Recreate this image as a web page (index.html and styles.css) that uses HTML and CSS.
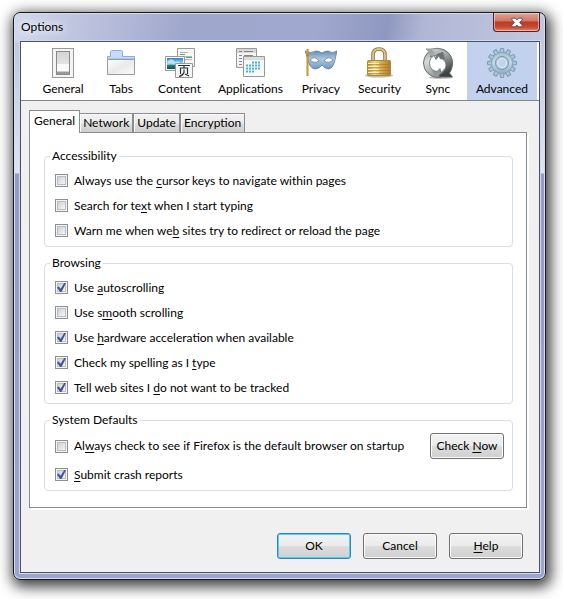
FILE: index.html
```html
<!DOCTYPE html>
<html lang="en">
<head>
<meta charset="utf-8">
<title>Options</title>
<link rel="stylesheet" href="styles.css">
</head>
<body>
<main class="window">
  <header class="titlebar">
    <h1 class="title">Options</h1>
    <button class="close" type="button" aria-label="Close">
      <svg width="12" height="11" viewBox="0 0 14 12"><path d="M1 1h4l2 2 2-2h4v2L10 6l3 3v2H9L7 9l-2 2H1V9l3-3-3-3z" fill="#fff" stroke="#534654" stroke-width="1"/></svg>
    </button>
  </header>
  <div class="content">
    <nav class="toolbar">
      <button class="category" type="button">
        <svg class="icon" viewBox="0 0 32 32">
          <defs><linearGradient id="sw" x2="0" y2="1"><stop stop-color="#d4d4d4"/><stop offset="1" stop-color="#eee"/></linearGradient></defs>
          <rect x="5.500" y="1.500" width="21" height="29" fill="#f4f4f4" stroke="#999"/>
          <rect x="9.500" y="4.500" width="13" height="23" fill="url(#sw)" stroke="#888"/>
          <path d="M10 17h12v7H10z" fill="#fafafa"/><path d="M10 24h12v3H10z" fill="#999"/><path d="M10 24.500h12" stroke="#ccc"/>
        </svg>
        <span>General</span>
      </button>
      <button class="category" type="button">
        <svg class="icon" viewBox="0 0 32 32">
          <defs><linearGradient id="fd" x2="1" y2="1"><stop stop-color="#fff"/><stop offset=".5" stop-color="#eaeaea"/><stop offset="1" stop-color="#fafafa"/></linearGradient></defs>
          <path d="M2.500 12V9.500h3V4.500l1-1h10l1 1v5h12V12z" fill="#c4dcf8" stroke="#8facd2"/>
          <path d="M2.500 12.500h27v15h-27z" fill="url(#fd)" stroke="#999ba0"/><path d="M3 11.500h26" stroke="#a8c8f0"/>
        </svg>
        <span>Tabs</span>
      </button>
      <button class="category" type="button">
        <svg class="icon" viewBox="0 0 32 32">
          <defs><linearGradient id="sky" x2="0" y2="1"><stop stop-color="#2c7fc4"/><stop offset=".55" stop-color="#b5e2f2"/><stop offset=".65" stop-color="#277d8b"/><stop offset="1" stop-color="#174f38"/></linearGradient></defs>
          <path d="M13.500 1.500h17v18h-17z" fill="#f7f7f7" stroke="#999"/>
          <path d="M16 5.500h8M18 9.500h10M21 12.500h7" stroke="#aeb4bd"/><path d="M16 7.500h5M22 10.500h6" stroke="#5a9c91"/>
          <path d="M1.500 9.500h19v14h-19z" fill="#fff" stroke="#999"/><path d="M3 11h16v11H3z" fill="url(#sky)"/><path d="M4 14q4-4 7 1q4-2 5 1H4z" fill="#bce3f3"/>
          <path d="M11.500 16.500h17v14h-17z" fill="#f5f5f5" stroke="#999"/>
          <path d="M14 18.500h12M20 18v3M16.500 27v-6h7v6M20 22.500v3q-1 3-5 4M21 27l4 2" fill="none" stroke="#333" stroke-width="1.200"/>
        </svg>
        <span>Content</span>
      </button>
      <button class="category wide" type="button">
        <svg class="icon" viewBox="0 0 32 32">
          <path d="M2.500 1.500h20v19h-20z" fill="#f4f4f4" stroke="#999"/><path d="M3 2h19v4H3z" fill="#d8d8d8"/>
          <path d="M5 4.500h3M10 4.500h9M5 8.500h3M10 8.500h9M5 11.500h3M5 14.500h3M5 17.500h3" stroke="#888"/>
          <path d="M9.500 9.500h21v20h-21z" fill="#f9f9f9" stroke="#999"/><path d="M10 10h20v3H10z" fill="#ddd"/>
          <path d="M18 15.500h9M12 18.500h15M12 21.500h15M12 24.500h9" stroke="#48b5d8" stroke-width="2" stroke-dasharray="2 1"/>
        </svg>
        <span>Applications</span>
      </button>
      <button class="category" type="button">
        <svg class="icon" viewBox="0 0 32 32">
          <defs><linearGradient id="mask" x2="0" y2="1"><stop stop-color="#688caf"/><stop offset=".45" stop-color="#adc9e5"/><stop offset="1" stop-color="#6e98c1"/></linearGradient></defs>
          <path d="M0 4q6 3 11 0q3 0 6 2q3-2 6-2q4 3 9 0q-1 4-2 9q-2 9-7 9q-4-1-6-4q-3 4-7 4q-6-1-7-10z" fill="url(#mask)" stroke="#55728d" stroke-width=".7"/>
          <path d="M5 13q5-5 9 1q-5 3-9-1zM19 14q4-6 9-1q-4 4-9 1z" fill="#fff" stroke="#5b7c9d" stroke-width=".7"/>
          <path d="M2.500 2v27" stroke="#b98620" stroke-width="2"/><path d="M2 3v25" stroke="#f5ce68" stroke-width=".6"/><circle cx="2.500" cy="8" r="1.500" fill="#b88620"/>
        </svg>
        <span>Privacy</span>
      </button>
      <button class="category" type="button">
        <svg class="icon" viewBox="0 0 32 32">
          <defs><linearGradient id="gold"><stop stop-color="#bd9340"/><stop offset=".3" stop-color="#f1d884"/><stop offset=".65" stop-color="#d0a447"/><stop offset="1" stop-color="#ad7e2b"/></linearGradient></defs>
          <ellipse cx="16" cy="28.500" rx="14" ry="2" fill="#555" opacity=".4"/>
          <path d="M10 14V8q0-6 6-6t6 6v6" fill="none" stroke="#8b6c2f" stroke-width="3.500"/><path d="M10 14V8q0-6 6-6t6 6v6" fill="none" stroke="#dcc68a" stroke-width="1.800"/>
          <rect x="4.500" y="13.500" width="23" height="15" rx="1" fill="url(#gold)" stroke="#b0883a"/>
          <path d="M5 17.500h22M5 20.500h22M5 23.500h22M5 26.500h22" stroke="#9b7328" opacity=".5"/><path d="M5 16.500h11M5 19.500h11M5 22.500h11M5 25.500h11" stroke="#fff2b2"/>
        </svg>
        <span>Security</span>
      </button>
      <button class="category" type="button">
        <svg class="icon" viewBox="0 0 32 32">
          <defs>
            <linearGradient id="steel-l" x2=".5" y2="1"><stop stop-color="#888"/><stop offset=".4" stop-color="#d8dadb"/><stop offset="1" stop-color="#8d9193"/></linearGradient>
            <linearGradient id="steel-r" x2=".4" y2="1"><stop stop-color="#d5d7d8"/><stop offset=".45" stop-color="#a2a6a8"/><stop offset="1" stop-color="#3d4244"/></linearGradient>
          </defs>
          <ellipse cx="19" cy="30.500" rx="12" ry="1.300" fill="#888" opacity=".6"/>
          <circle cx="16" cy="16" r="14.500" fill="url(#steel-l)" stroke="#6a6e70"/>
          <path d="M4 2h5q7-2 13 1 9 5 8.500 14-.5 6-3 9l3 4H20q-3 0-3-2 8-4 7-12-1-8-9-8l-7 2 2-4z" fill="url(#steel-r)" stroke="#666b6d" stroke-width=".7"/>
          <path d="M4 2h5l4 4-4 3z" fill="#a0a4a6"/>
          <path d="M21 5l-6 2-3 7 4-3 7 2q-1-4-2-8z" fill="#6c7173"/>
          <path d="M13 28l6-3 2-7-4 4-8-3q0 5 4 9z" fill="#8a8e90" opacity=".6"/>
          <path d="M12 8.500l2 4 3-4 1 3q6 1 6 7 0 3-3 5l-2 2-1-4-3 3q-7-1-7.500-8Q7.500 11 12 8.500z" fill="#fff" stroke="#5c6163" stroke-width=".7"/>
        </svg>
        <span>Sync</span>
      </button>
      <button class="category wide selected" type="button" aria-current="page">
        <svg class="icon" viewBox="0 0 32 32">
          <defs>
            <linearGradient id="gear" x2="0" y2="1"><stop stop-color="#a9c3d3"/><stop offset=".5" stop-color="#c1d8e8"/><stop offset="1" stop-color="#8fafc2"/></linearGradient>
            <path id="tooth" d="M13.800 6L14.500 1.500h3L18.200 6z"/>
          </defs>
          <g fill="#abc5d6" stroke="#7796ab" stroke-width=".9">
            <use href="#tooth"/><use href="#tooth" transform="rotate(30 16 16)"/><use href="#tooth" transform="rotate(60 16 16)"/><use href="#tooth" transform="rotate(90 16 16)"/><use href="#tooth" transform="rotate(120 16 16)"/><use href="#tooth" transform="rotate(150 16 16)"/><use href="#tooth" transform="rotate(180 16 16)"/><use href="#tooth" transform="rotate(210 16 16)"/><use href="#tooth" transform="rotate(240 16 16)"/><use href="#tooth" transform="rotate(270 16 16)"/><use href="#tooth" transform="rotate(300 16 16)"/><use href="#tooth" transform="rotate(330 16 16)"/>
          </g>
          <circle cx="16" cy="16" r="10.500" fill="url(#gear)" stroke="#86a4b8" stroke-width=".8"/>
          <circle cx="16" cy="16" r="6.500" fill="#b3cbdc" stroke="#7898ad"/><circle cx="16" cy="16" r="4.500" fill="#c2d3ed" stroke="#e0eef6"/>
        </svg>
        <span>Advanced</span>
      </button>
    </nav>
    <section class="body">
      <div class="tabs" role="tablist">
        <button class="tab active" type="button" role="tab" aria-selected="true">General</button>
        <button class="tab" type="button" role="tab">Network</button>
        <button class="tab" type="button" role="tab">Update</button>
        <button class="tab" type="button" role="tab">Encryption</button>
      </div>
      <div class="panel" role="tabpanel">
        <fieldset class="group">
          <legend>Accessibility</legend>
          <label class="option"><input type="checkbox"><span>Always use the <u>c</u>ursor keys to navigate within pages</span></label>
          <label class="option"><input type="checkbox"><span>Search for te<u>x</u>t when I start typing</span></label>
          <label class="option"><input type="checkbox"><span>Warn me when we<u>b</u> sites try to redirect or reload the page</span></label>
        </fieldset>
        <fieldset class="group">
          <legend>Browsing</legend>
          <label class="option"><input type="checkbox" checked><span>Use <u>a</u>utoscrolling</span></label>
          <label class="option"><input type="checkbox"><span>Use s<u>m</u>ooth scrolling</span></label>
          <label class="option"><input type="checkbox" checked><span>Use <u>h</u>ardware acceleration when available</span></label>
          <label class="option"><input type="checkbox" checked><span>Check my spelling as I <u>t</u>ype</span></label>
          <label class="option"><input type="checkbox" checked><span>Tell web sites I <u>d</u>o not want to be tracked</span></label>
        </fieldset>
        <fieldset class="group">
          <legend>System Defaults</legend>
          <div class="option-row">
            <label class="option"><input type="checkbox"><span>Al<u>w</u>ays check to see if Firefox is the default browser on startup</span></label>
            <button class="button" type="button"><span>Check <u>N</u>ow</span></button>
          </div>
          <label class="option"><input type="checkbox" checked><span><u>S</u>ubmit crash reports</span></label>
        </fieldset>
      </div>
    </section>
    <footer class="actions">
      <button class="button default" type="button">OK</button>
      <button class="button" type="button">Cancel</button>
      <button class="button" type="button"><span><u>H</u>elp</span></button>
    </footer>
  </div>
</main>
</body>
</html>
```

FILE: styles.css
```css
* { box-sizing: border-box; }

body {
  margin: 0;
  padding: 12px 17px 19px 13px;
  background: #fff;
  color: #000;
  font: 12px/16px Lato, "Noto Sans", sans-serif;
}

button {
  margin: 0;
  color: inherit;
  font: inherit;
}

u {
  text-underline-offset: 2px;
  text-decoration-skip-ink: none;
}

.window {
  padding: 0 5px 6px 6px;
  border: 1px solid #15171f;
  border-radius: 7px;
  background:
    linear-gradient(100deg, #d2d8ec 0, #c0c6df 60px, #a0a7cd 170px, #a0a8cf 300px, #8f98c0 370px, #b0b6d5 405px, #c3c8e0 100%) 0 0 / 100% 29px no-repeat,
    linear-gradient(#bcc3dc, #dfe3f1 160px, #929cc6 161px, #9ca5cb);
  box-shadow: inset 0 0 0 1px #d8deef, 2px 4px 14px 3px rgb(0 0 0 / 75%);
}

.titlebar {
  display: flex;
  justify-content: space-between;
  align-items: flex-start;
  height: 28px;
  padding-left: 1px;
}

.title {
  margin: 0;
  padding-top: 6px;
  font: inherit;
  text-shadow: 0 0 8px #fff, 0 0 8px #fff;
}

.close {
  display: flex;
  align-items: center;
  justify-content: center;
  width: 47px;
  height: 19px;
  padding: 0;
  border: 1px solid #4b2231;
  border-top: 0;
  border-radius: 0 0 4px 4px;
  background: linear-gradient(#e2a395, #d27565 8px, #bd3a25 9px, #c64a32 14px, #e38464);
  box-shadow: inset 0 0 0 1px rgb(255 255 255 / 45%);
}

.content {
  border: 1px solid #485069;
  background: #f0f0f0;
  box-shadow: 0 0 0 1px #d4daec;
}

.toolbar {
  display: flex;
  justify-content: flex-end;
  padding-right: 2px;
  border-bottom: 1px solid #858585;
  background: #fff;
}

.category {
  display: flex;
  flex-direction: column;
  align-items: center;
  gap: 2px;
  min-width: 58px;
  height: 58px;
  padding: 5px 8px 3px;
  border: 0;
  background: none;
}

.category.wide {
  padding-left: 9px;
  padding-right: 9px;
}

.category.selected { background: #c1d1ee; }

.icon {
  width: 32px;
  height: 32px;
}

.body { padding: 9px 12px 0 8px; }

.tabs {
  display: flex;
  align-items: flex-end;
}

.tab {
  height: 19px;
  padding: 0 3px;
  border: 1px solid #898c95;
  border-left-width: 0;
  border-bottom: 0;
  background: linear-gradient(#f2f2f2, #ebebeb 9px, #dddddd 10px, #cfcfcf);
  box-shadow: inset 1px 1px #fcfcfc;
}

.tab + .tab + .tab { border-left-width: 1px; }

.tab.active {
  z-index: 1;
  height: 23px;
  margin-bottom: -1px;
  padding: 0 4px 3px;
  border-left-width: 1px;
  background: #fff;
}

.panel {
  display: flex;
  flex-direction: column;
  gap: 8px;
  padding: 15px 13px 16px 14px;
  border: 1px solid #898c95;
  background: #fff;
  box-shadow: 2px 2px #fff;
}

.group {
  min-width: 0;
  margin: 0;
  padding: 4px 8px 3px 10px;
  border: 1px solid #d5dfe5;
  border-radius: 4px;
}

.group legend {
  margin-left: -5px;
  padding: 0 2px;
}

.option {
  display: flex;
  align-items: center;
  gap: 6px;
  height: 25px;
}

.option-row {
  display: flex;
  align-items: center;
  justify-content: space-between;
  padding: 1px 0 3px;
}

.option input {
  appearance: none;
  display: grid;
  place-items: center;
  flex: none;
  width: 13px;
  height: 13px;
  margin: 0;
  border: 1px solid #8e8f8f;
  background: linear-gradient(135deg, #cbcfd5, #f6f6f6) 2px 2px / 7px 7px no-repeat #f4f4f4;
  box-shadow: inset 0 0 0 1px #f4f4f4, inset 0 0 0 2px #b9bec5;
}

.option input:checked::before {
  content: "";
  width: 9px;
  height: 9px;
  background: #3f5596;
  clip-path: polygon(0 50%, 20% 40%, 40% 65%, 80% 0, 100% 0, 50% 100%, 35% 100%);
}

.button {
  width: 74px;
  height: 26px;
  padding: 0;
  border: 1px solid #707070;
  border-radius: 3px;
  background: linear-gradient(#f2f2f2, #ebebeb 50%, #dddddd 50%, #cfcfcf);
  box-shadow: inset 0 0 0 1px #fcfcfc;
}

.button.default {
  border-color: #3c7fb1;
  box-shadow: inset 0 0 0 1px #46d3f7;
}

.actions {
  display: flex;
  justify-content: flex-end;
  gap: 12px;
  padding: 25px 16px 13px;
}
```
